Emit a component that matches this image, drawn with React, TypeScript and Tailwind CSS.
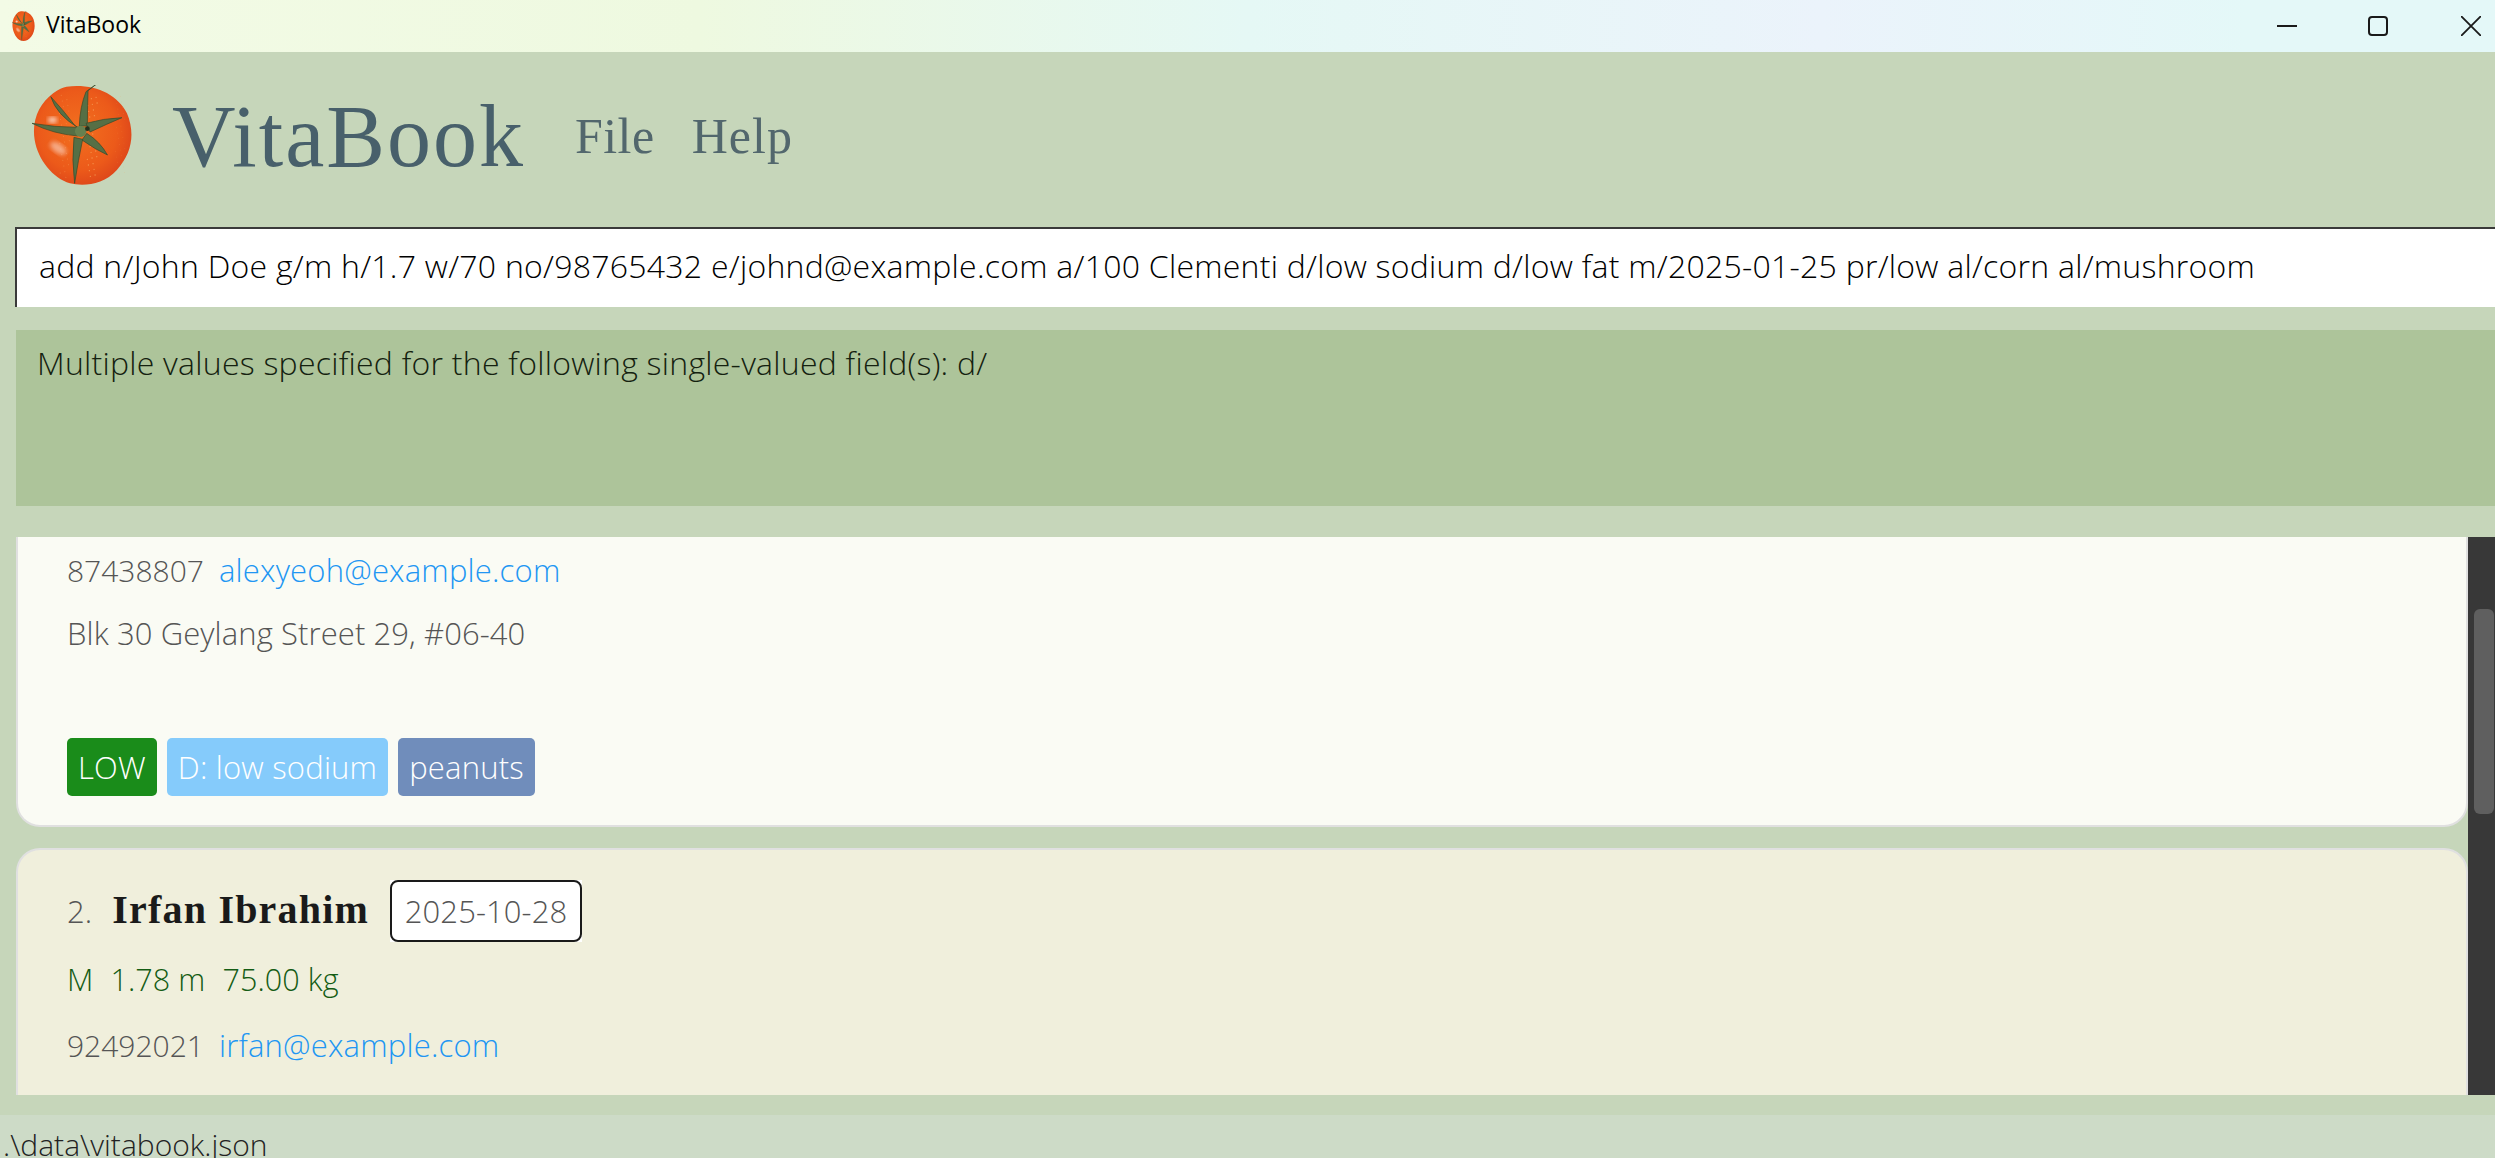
const speckles = Array.from({ length: 90 }, (_, i) => ({
  x: 125 + ((i * 83) % 250),
  y: 105 + ((i * 137) % 250),
  r: 0.8 + (i % 3) * 0.6,
}));

const leaves = [
  "M226 198Q190 150 153 110Q170 165 236 204Z",
  "M238 198Q240 140 258 95L292 70L264 92Q262 150 262 198Z",
  "M258 190Q310 175 365 173Q320 192 270 216Z",
  "M260 220Q300 245 322 285Q285 268 246 240Z",
  "M222 232Q215 300 224 370Q235 300 248 238Z",
  "M234 202Q165 202 97 190Q160 222 234 228Z",
];

const Tomato = ({ className, id }: { className: string; id: string }) => (
  <svg viewBox="97 75 301 300" preserveAspectRatio="none" className={className}>
    <defs>
      <radialGradient id={`${id}Body`} cx="45%" cy="45%" r="62%">
        <stop offset="0%" stopColor="#f2701f" />
        <stop offset="65%" stopColor="#ec5a1a" />
        <stop offset="100%" stopColor="#da421a" />
      </radialGradient>
      <filter id={`${id}Soft`}>
        <feGaussianBlur stdDeviation="6" />
      </filter>
    </defs>
    <path
      d="M200 80C280 70 350 100 380 160C405 220 395 280 350 330C310 375 250 380 210 370C160 355 115 300 105 240C95 180 120 130 160 100C175 88 190 82 200 80Z"
      fill={`url(#${id}Body)`}
    />
    {speckles.map((s, i) => (
      <circle key={i} cx={s.x} cy={s.y} r={s.r} fill="#f9a860" opacity="0.7" />
    ))}
    <ellipse cx="158" cy="180" rx="14" ry="10" fill="#fff" opacity="0.65" filter={`url(#${id}Soft)`} />
    <ellipse cx="175" cy="265" rx="28" ry="14" fill="#fff" opacity="0.45" filter={`url(#${id}Soft)`} transform="rotate(35 175 265)" />
    {leaves.map((d) => (
      <path key={d} d={d} fill="#566f45" stroke="#34492a" strokeWidth="2" strokeLinejoin="round" />
    ))}
    <circle cx="242" cy="214" r="17" fill="#66804f" />
    <circle cx="262" cy="206" r="7" fill="#24301c" />
  </svg>
);

const Chip = ({ label, color }: { label: string; color: string }) => (
  <div className={`h-[58px] px-[11px] flex items-center rounded-[5px] text-white ${color}`}>{label}</div>
);

export default function App() {
  return (
    <div className="w-[2495px] h-[1158px] overflow-hidden bg-[#c6d6ba] font-['Open_Sans',sans-serif] font-light text-[32px] tracking-[0.25px]">
      {/* title bar */}
      <div className="h-[52px] flex items-center bg-[linear-gradient(90deg,#f3fbe6_0%,#eef9e0_28%,#e5f8f5_50%,#ebf3fb_73%,#e4f8f8_90%)]">
        <Tomato id="small" className="ml-[12px] w-[23px] h-[30px]" />
        <span className="ml-[11px] mb-[3px] text-[23px] font-normal tracking-normal text-black">VitaBook</span>
        <div className="ml-auto flex items-center">
          <svg width="20" height="20" viewBox="0 0 20 20" className="mr-[71px]">
            <path d="M0 10H20" stroke="#1a1a1a" strokeWidth="2" />
          </svg>
          <svg width="20" height="20" viewBox="0 0 20 20" className="mr-[73px]">
            <rect x="1" y="1" width="18" height="18" rx="3" fill="none" stroke="#1a1a1a" strokeWidth="2" />
          </svg>
          <svg width="20" height="20" viewBox="0 0 20 20" className="mr-[14px]">
            <path d="M0 0L20 20M20 0L0 20" stroke="#1a1a1a" strokeWidth="1.8" />
          </svg>
        </div>
      </div>

      {/* header */}
      <div className="h-[175px] flex items-center font-['Liberation_Serif',serif] font-normal tracking-normal">
        <Tomato id="big" className="ml-[32px] mb-[9px] w-[101px] h-[100px]" />
        <span className="ml-[39px] mb-[6px] text-[88px] leading-none tracking-[2px] text-[#48606b]">VitaBook</span>
        <span className="ml-[50px] mb-[8px] text-[50px] leading-none tracking-[0.5px] text-[#52676d]">File</span>
        <span className="ml-[37px] mb-[8px] text-[50px] leading-none tracking-[1px] text-[#52676d]">Help</span>
      </div>

      {/* command box */}
      <div className="ml-[15px] h-[80px] flex items-center bg-white border-t-2 border-l-2 border-[#3a3a3a] pl-[22px] pb-[4px] text-black whitespace-nowrap">
        add n/John Doe g/m h/1.7 w/70 no/98765432 e/johnd@example.com a/100 Clementi d/low sodium d/low fat m/2025-01-25 pr/low al/corn al/mushroom
      </div>

      {/* result box */}
      <div className="ml-[16px] mt-[23px] h-[176px] bg-[#adc49a] pl-[21px] pt-[9px] text-[#14210f]">
        Multiple values specified for the following single-valued field(s): d/
      </div>

      {/* person list */}
      <div className="ml-[16px] mt-[31px] h-[558px] flex text-[31px] tracking-[0.1px]">
        <div className="flex-1 flex flex-col gap-[21px]">
          <div className="h-[290px] bg-[#fafbf4] border-2 border-t-0 border-[#e0e0e0] rounded-b-[24px] pl-[49px] pt-[13px]">
            <div className="h-[40px] flex items-center gap-[15px] text-[#555555]">
              <span className="text-[30px] tracking-normal">87438807</span>
              <span className="text-[#2196f3] tracking-[0.2px]">alexyeoh@example.com</span>
            </div>
            <div className="h-[40px] mt-[23px] flex items-center text-[#555555]">Blk 30 Geylang Street 29, #06-40</div>
            <div className="mt-[85px] flex gap-[10px] tracking-[0.2px]">
              <Chip label="LOW" color="bg-[#1a8c1a]" />
              <Chip label="D: low sodium" color="bg-[#85cbfb]" />
              <Chip label="peanuts" color="bg-[#708dbb]" />
            </div>
          </div>
          <div className="h-[247px] bg-[#f0efdc] border-2 border-b-0 border-[#e0e0e0] rounded-t-[24px] pl-[49px] pt-[30px]">
            <div className="h-[62px] flex items-center text-[#555555]">
              <span>2.</span>
              <span className="ml-[20px] mb-[2px] font-['Liberation_Serif',serif] font-bold text-[40px] tracking-[1.2px] text-[#1a1a1a]">Irfan Ibrahim</span>
              <div className="ml-[21px] bg-white">
                <div className="h-[62px] w-[192px] flex items-center justify-center border-2 border-[#1a1a1a] rounded-[8px]">2025-10-28</div>
              </div>
            </div>
            <div className="h-[40px] mt-[18px] flex items-center gap-[17px] text-[30.5px] text-[#145c14]">
              <span>M</span>
              <span>1.78 m</span>
              <span>75.00 kg</span>
            </div>
            <div className="h-[40px] mt-[25px] flex items-center gap-[15px] text-[#555555]">
              <span className="text-[30px] tracking-normal">92492021</span>
              <span className="text-[#2196f3] tracking-[0.2px]">irfan@example.com</span>
            </div>
          </div>
        </div>
        <div className="w-[27px] bg-[#383838] pt-[72px] pl-[6px]">
          <div className="w-[20px] h-[205px] rounded-[6px] bg-[#5f5f5f]" />
        </div>
      </div>

      {/* status bar */}
      <div className="mt-[20px] h-[43px] bg-[#cddbc7] pl-[3px] pt-[10px] text-[30px] tracking-normal leading-[40px] text-[#222222] whitespace-nowrap">.\data\vitabook.json</div>
    </div>
  );
}
